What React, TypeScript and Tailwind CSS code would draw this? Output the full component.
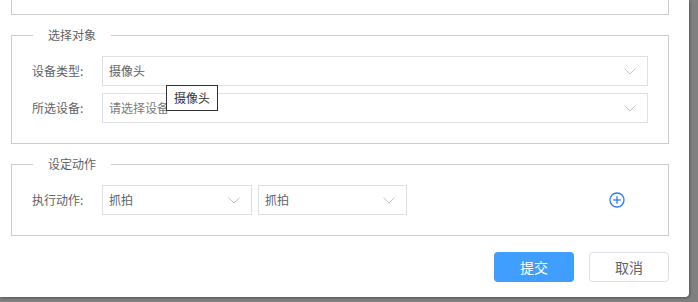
import React from 'react';

const Chevron: React.FC = () => (
  <svg width="12" height="7" viewBox="0 0 12 7" className="shrink-0">
    <polyline points="0.5,0.5 6,6 11.5,0.5" fill="none" stroke="#c0c4cc" strokeWidth="1" />
  </svg>
);

const SelectBox: React.FC<{ value: string; placeholder?: boolean; className?: string; children?: React.ReactNode }> = ({
  value,
  placeholder,
  className = '',
  children,
}) => (
  <div
    className={`relative h-[30px] border border-[#dcdfe6] bg-white flex items-center pl-[6px] pr-[11px] ${className}`}
  >
    <span className={`flex-1 text-xs leading-4 ${placeholder ? 'text-[#7a7a7a]' : 'text-[#606266]'}`}>{value}</span>
    <Chevron />
    {children}
  </div>
);

export default function App() {
  return (
    <div
      className="w-[698px] h-[302px] bg-[#808080] overflow-hidden"
      style={{ fontFamily: '"Noto Sans CJK SC", "Noto Sans", sans-serif' }}
    >
      <div className="w-[689px] h-[297px] bg-white rounded-br-[4px] shadow-[1px_1px_3px_rgba(0,0,0,0.35)] pl-[11px] pr-[20px] flex flex-col">
        {/* previous block, cut off at top */}
        <div className="h-[15px] border-x border-b border-[#cccccc]" />

        {/* 选择对象 */}
        <fieldset className="mt-[12px] border border-[#cccccc] p-0 m-0">
          <legend className="ml-[21px] px-[15px] text-xs leading-4 text-[#606266]">选择对象</legend>
          <div className="pl-[20px] pr-[20px] pt-[13px] pb-[20px] flex flex-col gap-[7px]">
            <div className="flex items-center">
              <span className="w-[70px] text-xs leading-4 text-[#606266]">设备类型:</span>
              <SelectBox value="摄像头" className="flex-1">
                <div className="absolute left-[63px] top-[28px] z-10 w-[52px] h-[26px] border border-[#333333] bg-white flex items-center justify-center text-xs leading-4 text-[#333333]">
                  摄像头
                </div>
              </SelectBox>
            </div>
            <div className="flex items-center">
              <span className="w-[70px] text-xs leading-4 text-[#606266]">所选设备:</span>
              <SelectBox value="请选择设备" placeholder className="flex-1" />
            </div>
          </div>
        </fieldset>

        {/* 设定动作 */}
        <fieldset className="mt-[12px] border border-[#cccccc] p-0 m-0">
          <legend className="ml-[21px] px-[15px] text-xs leading-4 text-[#606266]">设定动作</legend>
          <div className="pl-[20px] pr-[20px] pt-[13px] pb-[20px] flex items-center">
            <span className="w-[70px] text-xs leading-4 text-[#606266]">执行动作:</span>
            <SelectBox value="抓拍" className="w-[150px]" />
            <SelectBox value="抓拍" className="w-[149px] ml-[6px]" />
            <svg width="16" height="16" viewBox="0 0 16 16" className="ml-auto mr-[23px]">
              <circle cx="8" cy="8" r="7" fill="none" stroke="#2f7bf5" strokeWidth="1.3" />
              <line x1="8" y1="4.2" x2="8" y2="11.8" stroke="#2f7bf5" strokeWidth="1.3" />
              <line x1="4.2" y1="8" x2="11.8" y2="8" stroke="#2f7bf5" strokeWidth="1.3" />
            </svg>
          </div>
        </fieldset>

        <div className="mt-[16px] flex justify-end gap-[15px]">
          <button className="w-[80px] h-[30px] rounded-[4px] bg-[#409eff] text-white text-sm leading-5">提交</button>
          <button className="w-[80px] h-[30px] rounded-[4px] border border-[#dcdfe6] bg-white text-[#606266] text-sm leading-5">
            取消
          </button>
        </div>
      </div>
    </div>
  );
}
